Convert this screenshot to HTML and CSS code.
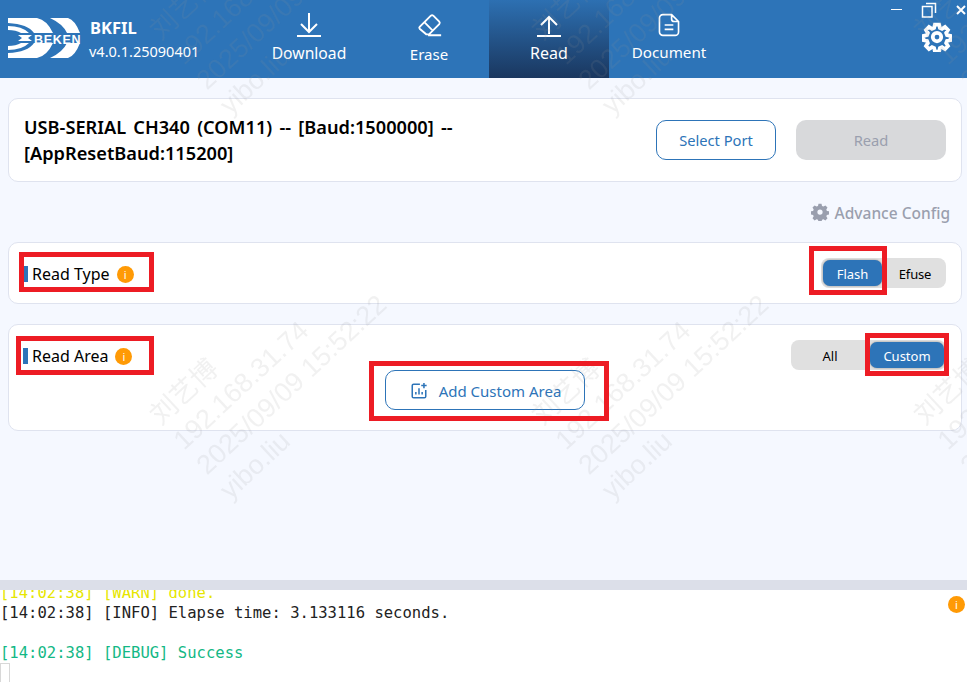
FILE: index.html
```html
<!DOCTYPE html>
<html lang="en">
<head>
<meta charset="utf-8">
<title>BKFIL</title>
<link rel="stylesheet" href="styles.css">
</head>
<body>
<div class="app">
  <header class="topbar">
    <div class="brand">
      <svg class="logo" viewBox="0 0 74 42" width="74" height="42">
        <path fill="#fff" d="M1 1H30Q40 3 46 16H27Q21 7 1 6z"/>
        <path fill="#fff" d="M1 9Q15 9 22 16H14Q9 13 1 13z"/>
        <path fill="#fff" d="M11 18H25L21 21L25 24H11L15 21z"/>
        <path fill="#fff" d="M1 33Q15 33 22 26H14Q9 29 1 29z"/>
        <path fill="#fff" d="M1 41H30Q40 39 46 26H27Q21 35 1 36z"/>
        <path fill="#fff" d="M43 1H61Q68 3 73 16H60Q56 7 43 1z"/>
        <path fill="#fff" d="M43 41H61Q68 39 73 26H60Q56 35 43 41z"/>
        <text class="logo-text" x="27" y="26.500">BEKEN</text>
      </svg>
      <div class="brand-text">
        <div class="brand-name">BKFIL</div>
        <div class="brand-version">v4.0.1.25090401</div>
      </div>
    </div>
    <nav class="nav">
      <a class="nav-item">
        <svg class="nav-icon" viewBox="0 0 30 30" width="30" height="30"><path d="M15 3v18M7 14l8 8 8-8M3 26h24"/></svg>
        <span>Download</span>
      </a>
      <a class="nav-item nav-erase">
        <svg class="nav-icon" viewBox="0 0 30 30" width="28" height="28"><path d="M5 17 17 5a2 2 0 0 1 2.600 0l6.400 6.400a2 2 0 0 1 0 2.600L15 25h-3l-7-6a1.500 1.500 0 0 1 0-2zM10 12l9 9M14 26h14"/></svg>
        <span>Erase</span>
      </a>
      <a class="nav-item is-active">
        <svg class="nav-icon" viewBox="0 0 30 30" width="30" height="30"><path d="M15 24V7M7 15l8-8 8 8M3 26h24"/></svg>
        <span>Read</span>
      </a>
      <a class="nav-item nav-document">
        <svg class="nav-icon nav-doc" viewBox="0 0 30 30" width="26" height="26"><path d="M8 3h10l8 8v12a4 4 0 0 1-4 4H8a4 4 0 0 1-4-4V7a4 4 0 0 1 4-4zM18 3v5a3 3 0 0 0 3 3h5M10 15h10M10 20h10"/></svg>
        <span>Document</span>
      </a>
    </nav>
    <div class="window">
      <div class="window-controls">
        <span class="win-min"></span>
        <svg class="win-icon" viewBox="0 0 16 16" width="16" height="16"><path d="M5 1.500h9.500V11M1.500 4.500h9.500V15H1.500z"/></svg>
        <svg class="win-icon win-close" viewBox="0 0 10 10" width="10" height="10"><path d="M1 1l8 8M9 1l-8 8"/></svg>
      </div>
      <svg class="gear" viewBox="0 0 24 24" width="30" height="30"><path d="M10.300 2h3.400l.6 2.800 1.700.7 2.400-1.500 2.400 2.400-1.500 2.400.7 1.700 2.800.6v3.400l-2.800.6-.7 1.700 1.500 2.400-2.400 2.400-2.400-1.500-1.700.7-.6 2.800h-3.400l-.6-2.800-1.700-.7-2.400 1.500-2.400-2.400 1.500-2.400-.7-1.700-2.800-.6v-3.400l2.800-.6.7-1.700-1.500-2.400 2.400-2.400 2.400 1.500 1.700-.7z"/><circle cx="12" cy="12" r="3.400"/></svg>
    </div>
  </header>

  <main class="content">
    <section class="card port-card">
      <div class="port-text">USB-SERIAL CH340 (COM11) -- [Baud:1500000] -- [AppResetBaud:115200]</div>
      <div class="port-actions">
        <button class="btn btn-outline btn-port">Select Port</button>
        <button class="btn btn-disabled">Read</button>
      </div>
    </section>

    <div class="advance">
      <svg class="advance-icon" viewBox="0 0 24 24" width="18" height="18"><path fill-rule="evenodd" d="M10 1h4l.7 3 1.900.8 2.600-1.600 2.800 2.800-1.600 2.600.8 1.900 3 .7v4l-3 .7-.8 1.900 1.600 2.600-2.800 2.800-2.600-1.600-1.900.8-.7 3h-4l-.7-3-1.900-.8-2.600 1.600-2.800-2.800 1.600-2.600-.8-1.900-3-.7v-4l3-.7.8-1.900-1.600-2.600 2.800-2.800 2.600 1.600 1.900-.8zM12 8.500a3.500 3.500 0 1 0 0 7 3.500 3.500 0 0 0 0-7z"/></svg>
      <span>Advance Config</span>
    </div>

    <section class="card type-card">
      <div class="section-title">
        <i class="title-bar"></i><span>Read Type</span><b class="info">i</b>
      </div>
      <div class="segment">
        <span class="seg-item seg-active seg-flash">Flash</span>
        <span class="seg-item seg-efuse">Efuse</span>
      </div>
    </section>

    <section class="card area-card">
      <div class="area-head">
        <div class="section-title">
          <i class="title-bar"></i><span>Read Area</span><b class="info">i</b>
        </div>
        <div class="segment">
          <span class="seg-item seg-all">All</span>
          <span class="seg-item seg-active seg-custom">Custom</span>
        </div>
      </div>
      <button class="btn btn-outline btn-add">
        <svg class="add-icon" viewBox="0 0 20 20" width="18" height="18"><path d="M11 2.500H4A1.500 1.500 0 0 0 2.500 4v12A1.500 1.500 0 0 0 4 17.500h12a1.500 1.500 0 0 0 1.500-1.500V9M6.500 14v-3M10 14V7M13.500 14v-3"/><path class="add-plus" d="M15.500 1v6M12.500 4h6"/></svg>
        <span>Add Custom Area</span>
      </button>
    </section>
  </main>

  <div class="splitter"></div>

  <section class="log">
    <div class="log-line log-warn">[14:02:38] [WARN] done.</div>
    <div class="log-line">[14:02:38] [INFO] Elapse time: 3.133116 seconds.</div>
    <div class="log-line">&nbsp;</div>
    <div class="log-line log-debug">[14:02:38] [DEBUG] Success</div>
    <div class="log-caret"></div>
    <b class="info log-info">i</b>
  </section>
</div>

<div class="watermarks" aria-hidden="true">
  <div class="wm"><div>刘艺博</div><div>192.168.31.74</div><div>2025/09/09 15:52:22</div><div>yibo.liu</div></div>
  <div class="wm"><div>刘艺博</div><div>192.168.31.74</div><div>2025/09/09 15:52:22</div><div>yibo.liu</div></div>
  <div class="wm"><div>刘艺博</div><div>192.168.31.74</div><div>2025/09/09 15:52:22</div><div>yibo.liu</div></div>
  <div class="wm"><div>刘艺博</div><div>192.168.31.74</div><div>2025/09/09 15:52:22</div><div>yibo.liu</div></div>
  <div class="wm"><div>刘艺博</div><div>192.168.31.74</div><div>2025/09/09 15:52:22</div><div>yibo.liu</div></div>
  <div class="wm"><div>刘艺博</div><div>192.168.31.74</div><div>2025/09/09 15:52:22</div><div>yibo.liu</div></div>
</div>

<div class="mark mark-type"></div>
<div class="mark mark-area"></div>
<div class="mark mark-flash"></div>
<div class="mark mark-custom"></div>
<div class="mark mark-add"></div>
</body>
</html>
```

FILE: styles.css
```css
* { box-sizing: border-box; }
html, body { margin: 0; height: 100%; overflow: hidden; }
body {
  font-family: "Noto Sans", "Noto Sans CJK SC", sans-serif;
  color: #000;
  background: #f5f8ff;
}
.app { display: flex; flex-direction: column; height: 682px; }

/* top bar */
.topbar {
  height: 78px;
  flex: none;
  display: flex;
  background: #2d74b8;
  color: #fff;
}
.brand { width: 249px; display: flex; align-items: flex-start; padding: 17px 0 0 7px; }
.logo { flex: none; margin-right: 9px; }
.logo-text { font: 700 12.500px "Liberation Sans", sans-serif; fill: #fff; letter-spacing: .7px; }
.brand-text { padding-top: 1px; }
.brand-name { font-size: 16.500px; font-weight: 700; line-height: 20px; }
.brand-version { font-size: 14.500px; line-height: 22px; margin-top: 2px; white-space: nowrap; margin-left: -1px; }
.nav { display: flex; }
.nav-item {
  width: 120px;
  height: 78px;
  display: flex;
  flex-direction: column;
  align-items: center;
  padding-top: 10px;
  font-size: 15.700px;
  line-height: 20px;
}
.nav-item span { margin-top: 3px; }
.is-active span { font-size: 16px; }
.nav-erase { padding-top: 11px; }
.nav-erase span { margin-top: 5px; font-size: 15px; }
.nav-document { padding-top: 12px; }
.nav-document span { margin-top: 4px; font-size: 15.200px; }
.nav-icon { fill: none; stroke: #fff; stroke-width: 2; }
.nav-doc { stroke-width: 1.900; }
.is-active { background: linear-gradient(#2d70b2, #1a375f); }
.window { flex: 1; display: flex; flex-direction: column; align-items: flex-end; padding-right: 1px; }
.window-controls { display: flex; align-items: center; height: 18px; padding-top: 1px; }
.win-min { width: 11px; height: 1px; background: #fff; margin-right: 19px; margin-top: -1px; }
.win-icon { fill: none; stroke: #fff; stroke-width: 1.500; margin-right: 19px; }
.win-close { margin-right: 0; stroke-width: 2; }
.gear { fill: none; stroke: #fff; stroke-width: 3; margin: 4px 14px 0 0; }

/* content */
.content { flex: 1; padding: 20px 5px 0 8px; }
.card { background: #fff; border: 1px solid #dfe3ef; border-radius: 10px; }
.port-card {
  height: 84px;
  display: flex;
  align-items: center;
  justify-content: space-between;
  padding: 0 15px 0 15px;
}
.port-text { width: 480px; font-size: 18.200px; font-weight: 600; line-height: 26px; word-spacing: 2.500px; }
.port-actions { display: flex; gap: 20px; }
.btn { font-family: inherit; border-radius: 10px; height: 40px; font-size: 14.700px; }
.btn-outline { background: #fff; border: 1px solid #2d74b8; color: #2d74b8; }
.btn-port { width: 120px; }
.btn-disabled { width: 150px; border: 0; background: #d8d9db; color: #9a9fae; }

.advance {
  height: 60px;
  display: flex;
  align-items: center;
  justify-content: flex-end;
  gap: 6px;
  padding: 2px 12px 0 0;
  color: #9a9fae;
  font-size: 15.500px;
  font-weight: 500;
}
.advance-icon { fill: #9a9fae; margin-top: -2px; }

.type-card {
  height: 62px;
  display: flex;
  justify-content: space-between;
  align-items: center;
  padding: 0 15px 0 14px;
}
.section-title { display: flex; align-items: center; font-size: 16px; line-height: 20px; }
.type-card .section-title { padding-top: 2px; }
.title-bar { width: 5px; height: 16px; background: #2d74b8; margin-right: 4px; }
.info {
  width: 17px;
  height: 17px;
  margin-left: 7px;
  border-radius: 50%;
  background: #ff9a05;
  color: #fff;
  font: 400 11px/17px "Noto Sans", sans-serif;
  text-align: center;
}
.segment { display: flex; height: 30px; padding: 2px; background: #e0e0e0; border-radius: 8px; font-size: 13px; }
.seg-item { display: flex; align-items: center; justify-content: center; height: 26px; padding-top: 1px; }
.seg-active { background: #2d74b8; color: #fff; border-radius: 7px; box-shadow: 0 0 2px rgba(0,0,0,.4); }
.seg-flash { width: 59px; }
.seg-efuse { width: 62px; padding-left: 4px; letter-spacing: -.2px; }
.seg-all { width: 77px; padding-right: 3px; }
.seg-custom { width: 74px; }

.area-card { height: 107px; margin-top: 20px; padding: 15px 15px 0 14px; display: flex; flex-direction: column; }
.area-head { display: flex; justify-content: space-between; align-items: flex-start; height: 30px; }
.area-head .section-title { margin-top: 6px; }
.btn-add {
  align-self: center;
  width: 200px;
  display: flex;
  align-items: center;
  justify-content: center;
  gap: 11px;
  flex: none;
  padding: 1px 0 0 2px;
  font-size: 15px;
}
.add-icon { fill: none; stroke: #2d74b8; stroke-width: 1.700; }

/* log */
.splitter { height: 10px; flex: none; background: #dcdfe9; }
.log {
  height: 92px;
  flex: none;
  position: relative;
  background: #fff;
  overflow: hidden;
  font: 15.550px/20px "DejaVu Sans Mono", monospace;
  color: #222;
  padding: 0;
}
.log-line { white-space: pre; height: 20px; }
.log-warn { color: #e6e600; margin-top: -7px; }
.log-debug { color: #13b885; }
.log-caret { width: 10px; height: 20px; border: 1px solid #d8d8d8; }
.log-info { position: absolute; top: 6px; right: 2px; margin: 0; }

/* watermark */
.watermarks {
  position: fixed;
  inset: 0;
  display: grid;
  grid-template-columns: repeat(3, 382px);
  grid-template-rows: repeat(2, 385px);
  padding: 22px 0 0 143px;
  pointer-events: none;
  overflow: hidden;
}
.wm {
  font: 27px/34px "Liberation Sans", "Noto Sans CJK SC", sans-serif;
  color: rgba(150,150,150,.13);
  transform: rotate(-43deg);
  transform-origin: 0 0;
  white-space: nowrap;
  height: 136px;
}

/* annotations */
.mark { position: fixed; border: 5px solid #ed1c24; pointer-events: none; }
.mark-type { left: 19px; top: 252px; width: 135px; height: 40px; }
.mark-area { left: 16px; top: 336px; width: 138px; height: 39px; }
.mark-flash { left: 809px; top: 246px; width: 78px; height: 49px; }
.mark-custom { left: 865px; top: 333px; width: 84px; height: 43px; }
.mark-add { left: 369px; top: 361px; width: 240px; height: 60px; }
```
